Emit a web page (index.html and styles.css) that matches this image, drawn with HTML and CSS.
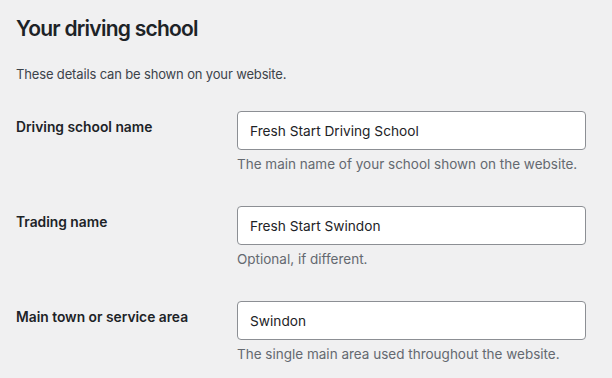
FILE: index.html
```html
<!DOCTYPE html>
<html lang="en">
<head>
  <meta charset="UTF-8" />
  <meta name="viewport" content="width=device-width, initial-scale=1" />
  <title>Your driving school</title>
  <link rel="stylesheet" href="styles.css">
</head>
<body>

  <div class="wrap">
    <h2>Your driving school</h2>
    <p class="intro">These details can be shown on your website.</p>

    <div class="form-table">
      <div class="row">
        <label for="schoolName">Driving school name</label>
        <div class="field">
          <input type="text" id="schoolName" value="Fresh Start Driving School" />
          <p class="help">The main name of your school shown on the website.</p>
        </div>
      </div>

      <div class="row">
        <label for="tradingName">Trading name</label>
        <div class="field">
          <input type="text" id="tradingName" value="Fresh Start Swindon" />
          <p class="help">Optional, if different.</p>
        </div>
      </div>

      <div class="row">
        <label for="mainTown">Main town or service area</label>
        <div class="field">
          <input type="text" id="mainTown" value="Swindon" />
          <p class="help">The single main area used throughout the website.</p>
        </div>
      </div>
    </div>
  </div>

</body>
</html>
```

FILE: styles.css
```css
body {
  margin: 0;
  background: #f0f0f1;
  color: #1d2327;
  font-family: Inter, "Noto Sans", sans-serif;
}

.wrap {
  padding: 14px 16px 0;
}

h2 {
  margin: 0;
  font-size: 21px;
  line-height: 30px;
  font-weight: 600;
  letter-spacing: -0.75px;
}

.intro {
  margin: 20px 0 0;
  font-size: 13px;
  line-height: 20px;
  letter-spacing: -0.15px;
  color: #3c434a;
}

.form-table {
  display: grid;
  row-gap: 32px;
  margin-top: 27px;
}

.row {
  display: grid;
  grid-template-columns: 221px 349px;
}

.row label {
  padding-top: 6px;
  font-size: 13.8px;
  font-weight: 600;
  line-height: 20px;
}

.field input {
  display: block;
  box-sizing: border-box;
  width: 349px;
  height: 39px;
  margin: 0;
  padding: 0 12px;
  border: 1px solid #8c8f94;
  border-radius: 4px;
  background: #fff;
  font-family: inherit;
  font-size: 13.7px;
  color: #1d2327;
}

.help {
  margin: 4px 0 0;
  font-size: 13.5px;
  line-height: 20px;
  color: #646970;
}
```
